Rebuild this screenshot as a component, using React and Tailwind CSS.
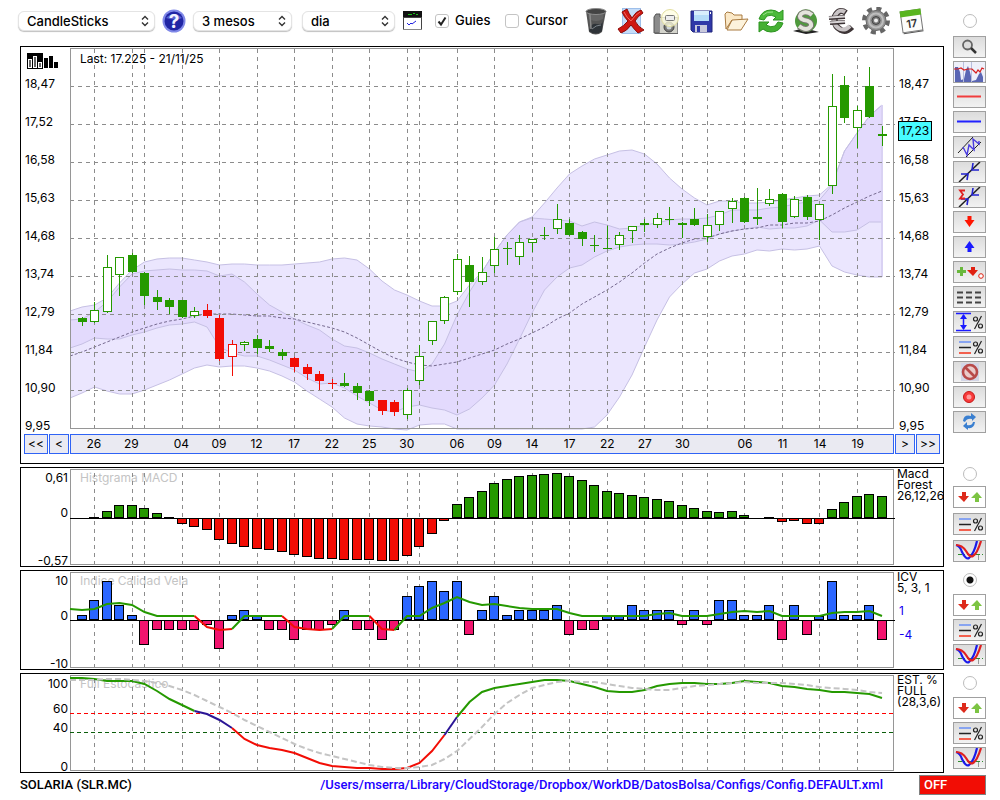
import { useState } from "react";

// session index -> x inside the plot
const xAt = (i) => 82 + 12.5 * i;
const colAt = (i) => Math.floor(xAt(i));

// [session index, day label]
const DAYS = [
  [1, "26"], [4, "29"], [5, ""], [8, "04"], [11, "09"], [14, "12"], [17, "17"],
  [20, "22"], [23, "25"], [26, "30"], [27, ""], [30, "06"], [33, "09"], [36, "14"],
  [39, "17"], [42, "22"], [45, "27"], [48, "30"], [50, ""], [53, "06"], [56, "11"],
  [59, "14"], [62, "19"],
];

const PRICES = ["18,47", "17,52", "16,58", "15,63", "14,68", "13,74", "12,79", "11,84", "10,90", "9,95"];

// [high, body top, body bottom, low, kind]; g/r = filled, G/R = hollow
const CANDLES = [
  [317, 318, 322, 326, "g"], [302, 310, 322, 323, "G"], [255, 267, 312, 313, "G"],
  [257, 257, 275, 296, "G"], [253, 255, 272, 273, "g"], [272, 273, 296, 305, "g"],
  [290, 297, 302, 310, "g"], [298, 300, 307, 314, "g"], [300, 300, 317, 318, "g"],
  [307, 311, 316, 318, "G"], [304, 310, 316, 318, "r"], [315, 318, 359, 361, "r"],
  [340, 344, 357, 376, "R"], [341, 342, 345, 351, "G"], [335, 339, 348, 354, "g"],
  [340, 346, 349, 352, "g"], [349, 352, 356, 360, "g"], [357, 358, 367, 372, "r"],
  [364, 367, 374, 380, "r"], [371, 374, 381, 390, "r"], [379, 383, 384, 389, "r"],
  [373, 383, 386, 387, "g"], [383, 386, 393, 400, "g"], [390, 391, 401, 406, "g"],
  [400, 400, 411, 415, "r"], [400, 402, 412, 416, "r"], [388, 390, 415, 419, "G"],
  [345, 356, 381, 385, "G"], [321, 321, 341, 345, "G"], [296, 297, 321, 324, "G"],
  [254, 259, 292, 295, "G"], [256, 265, 282, 307, "g"], [257, 272, 282, 285, "G"],
  [237, 249, 266, 273, "G"], [242, 248, 249, 265, "g"], [235, 242, 257, 265, "G"],
  [239, 239, 243, 252, "G"], [227, 235, 236, 240, "g"], [204, 219, 229, 234, "G"],
  [219, 223, 235, 236, "g"], [231, 232, 239, 246, "g"], [235, 245, 246, 252, "g"],
  [226, 248, 249, 249, "g"], [232, 235, 245, 250, "G"], [226, 226, 231, 243, "G"],
  [219, 223, 225, 232, "g"], [213, 218, 225, 228, "G"], [207, 219, 220, 225, "g"],
  [222, 223, 225, 238, "g"], [208, 219, 225, 226, "g"], [214, 225, 237, 242, "G"],
  [211, 211, 225, 231, "G"], [198, 201, 209, 223, "G"], [197, 198, 222, 223, "g"],
  [188, 217, 219, 225, "g"], [189, 199, 204, 206, "G"], [193, 194, 222, 228, "g"],
  [196, 199, 217, 218, "G"], [195, 197, 217, 220, "g"], [204, 204, 220, 240, "G"],
  [74, 106, 186, 194, "G"], [76, 85, 118, 123, "g"], [106, 110, 128, 148, "G"],
  [67, 86, 117, 118, "g"], [126, 134, 136, 146, "g"],
];

// band series start one session before the first candle
const OUTER_TOP = [
  311, 307, 305, 298, 283, 270, 262, 259, 258, 258, 260, 262, 265, 264, 264, 265, 265, 265, 264, 263, 262, 259,
  258, 260, 269, 281, 290, 295, 301, 306, 306, 301, 285, 272, 252, 235, 222, 217, 203, 188, 174, 166, 159, 155,
  151, 150, 154, 164, 178, 189, 198, 205, 201, 201, 203, 203, 202, 200, 198, 196, 195, 184, 151, 133, 116, 105,
];
const INNER_TOP = [
  320, 319, 312, 302, 287, 274, 271, 270, 269, 270, 270, 271, 276, 274, 282, 294, 305, 312, 319, 325, 330, 339,
  346, 348, 353, 359, 364, 369, 372, 364, 344, 315, 292, 272, 252, 235, 222, 218, 219, 220, 221, 226, 222, 225,
  229, 228, 225, 223, 220, 219, 219, 218, 215, 210, 210, 210, 208, 207, 204, 202, 200, 185, 151, 133, 116, 105,
];
const MIDDLE = [
  356, 352, 347, 342, 337, 332, 328, 324, 321, 319, 316, 314, 314, 314, 315, 316, 316, 318, 319, 322, 325, 328,
  332, 338, 345, 352, 358, 362, 365, 366, 364, 362, 358, 354, 350, 344, 339, 333, 327, 319, 313, 304, 297, 290,
  282, 273, 263, 254, 248, 243, 239, 238, 234, 231, 229, 228, 225, 225, 223, 223, 221, 215, 208, 202, 196, 191,
];
const INNER_LOW = [
  348, 344, 338, 339, 339, 335, 332, 328, 325, 324, 322, 327, 347, 353, 356, 356, 360, 365, 370, 378, 384, 383,
  388, 396, 403, 410, 412, 407, 405, 408, 410, 415, 409, 398, 385, 364, 339, 313, 290, 277, 268, 265, 257, 251,
  247, 245, 244, 244, 245, 244, 242, 239, 234, 231, 229, 227, 229, 228, 228, 226, 220, 232, 232, 230, 222, 222,
];
const OUTER_LOW = [
  398, 393, 387, 391, 394, 394, 390, 385, 380, 374, 368, 365, 367, 366, 366, 368, 371, 376, 382, 391, 399, 407,
  418, 424, 426, 427, 429, 430, 425, 424, 424, 429, 429, 429, 429, 429, 429, 429, 429, 429, 429, 429, 427, 415,
  397, 375, 347, 320, 297, 284, 273, 269, 261, 256, 254, 250, 251, 249, 250, 249, 246, 266, 272, 275, 277, 277,
];

const MACD = [
  0, 1, 7, 13, 13, 10, 5, 1, -5, -8, -11, -21, -25, -28, -30, -31, -33, -36, -38, -40, -40, -41, -41, -41, -42, -42,
  -37, -28, -15, -2, 14, 21, 27, 35, 39, 42, 43, 44, 45, 42, 38, 33, 27, 25, 23, 21, 19, 17, 13, 10, 7, 6, 7, 3, 0,
  1, -3, -2, -5, -5, 9, 16, 22, 24, 22,
];
const ICV = [
  5, 20, 39, 15, 5, -24, -9, -9, -9, -9, -4, -28, 5, 10, 5, -9, -9, -19, -9, -9, -4, 10, -9, -9, -19, -9, 24, 34, 39,
  29, 39, -14, 10, 24, 5, 10, 10, 10, 15, -14, -9, -9, 4, 4, 15, 10, 10, 10, -4, 10, -4, 20, 20, 5, 5, 15, -19, 15,
  -14, 4, 39, 5, 5, 15, -19,
];
const ICV_LINE = [
  609, 610, 609, 604, 603, 605, 612, 616, 616, 616, 616, 627, 630, 629, 616, 616, 616, 616, 627, 629, 630, 629, 616,
  616, 616, 629, 630, 616, 616, 608, 603, 597, 602, 605, 604, 606, 608, 609, 609, 609, 613, 616, 616, 616, 616, 616,
  616, 614, 613, 616, 616, 616, 614, 612, 611, 612, 611, 616, 616, 616, 616, 613, 612, 612, 611, 616,
];
const STOCH = [
  678, 678, 679, 681, 681, 681, 684, 691, 699, 705, 711, 714, 720, 728, 739, 745, 748, 750, 753, 758, 763, 766, 767,
  768, 768, 769, 769, 768, 763, 751, 735, 717, 702, 692, 688, 686, 684, 682, 680, 680, 681, 684, 687, 691, 692, 692,
  690, 686, 684, 683, 683, 684, 684, 683, 681, 682, 683, 686, 687, 689, 690, 692, 692, 693, 694, 698,
];
const STOCH_SLOW = [
  680, 680, 680, 679, 679, 680, 681, 683, 686, 690, 695, 701, 707, 713, 720, 726, 732, 738, 744, 749, 753, 756, 759,
  762, 765, 767, 768, 768, 767, 765, 759, 751, 739, 727, 714, 703, 695, 688, 685, 682, 681, 682, 682, 684, 686, 688,
  689, 690, 690, 688, 686, 685, 684, 683, 682, 683, 683, 683, 684, 685, 687, 688, 689, 690, 692, 693,
];

const GREEN = "#259900";
const RED = "#f20d05";
const INDIGO = "#2a1596";

// [from session, to session, colour]
const ICV_PARTS = [
  [-1, 9, GREEN], [9, 12, RED], [12, 16, GREEN], [16, 20, RED], [20, 23, GREEN], [23, 25, RED], [25, 64, GREEN],
];
const STOCH_PARTS = [
  [-1, 9, GREEN], [9, 12, INDIGO], [12, 29, RED], [29, 30, INDIGO], [30, 64, GREEN],
];

const pointAt = (y, k) => `${k === 0 ? 70 : xAt(k - 1)},${y}`;
const points = (series) => series.map(pointAt).join(" ");
const band = (top, low) => `${points(top)} ${low.map(pointAt).reverse().join(" ")}`;

function Plot({ top, height, children }) {
  return (
    <svg
      className="relative block w-full"
      height={height}
      viewBox={`70 ${top} 824 ${height}`}
      preserveAspectRatio="none"
      overflow="visible"
      aria-hidden="true"
    >
      {children}
    </svg>
  );
}

function Frame({ top, bottom }) {
  return (
    <rect
      x="70.5" y={top + 0.5} width="823" height={bottom - top}
      fill="none" stroke="#969696" shapeRendering="crispEdges"
    />
  );
}

function DayLines({ top, bottom }) {
  return (
    <g stroke="#8c8c8c" strokeDasharray="4 4" shapeRendering="crispEdges">
      {DAYS.map(([i]) => (
        <path key={i} d={`M${colAt(i) + 0.5} ${top}V${bottom}`} />
      ))}
    </g>
  );
}

function Bars({ values, base, up, down }) {
  return (
    <g stroke="#000" shapeRendering="crispEdges">
      {values.map((v, i) =>
        v === 0 ? null : (
          <rect
            key={i}
            x={Math.floor(xAt(i) - 5) + 0.5}
            y={(v > 0 ? base - v : base) + 0.5}
            width="9"
            height={v > 0 ? Math.max(v - 1, 0.5) : -v}
            fill={v > 0 ? up : down}
          />
        )
      )}
      <path d={`M70 ${base + 0.5}H895`} />
    </g>
  );
}

function ColoredLine({ series, parts }) {
  const all = series.map(pointAt);
  return (
    <g fill="none" strokeWidth="2">
      {parts.map(([from, to, color]) => (
        <polyline key={from} points={all.slice(from + 1, to + 2).join(" ")} stroke={color} />
      ))}
    </g>
  );
}

function Candles() {
  return (
    <g shapeRendering="crispEdges">
      {CANDLES.map(([high, top, bottom, low, kind], i) => {
        const x = colAt(i);
        const color = kind.toLowerCase() === "g" ? GREEN : RED;
        const hollow = kind === "G" || kind === "R";
        return (
          <g key={i}>
            <rect x={x} y={high} width="1" height={low - high} fill={color} />
            {hollow ? (
              <rect x={x - 3.5} y={top + 0.5} width="8" height={bottom - top - 1} fill="#fff" stroke={color} />
            ) : (
              <rect x={x - 4} y={top} width="9" height={bottom - top} fill={color} />
            )}
          </g>
        );
      })}
    </g>
  );
}

/* ---------- toolbar ---------- */

function Picker({ label, options, className }) {
  return (
    <div className={`relative ${className}`}>
      <select
        aria-label={label}
        className="block h-5 w-full appearance-none rounded-md border border-[#e4e4e4] bg-white pl-2 text-[13px] font-medium leading-4 text-black shadow-[0_1px_1px_rgba(0,0,0,0.25)]"
      >
        {options.map((o) => (
          <option key={o}>{o}</option>
        ))}
      </select>
      <svg className="pointer-events-none absolute right-1.5 top-1 h-3 w-2" viewBox="0 0 8 12" fill="none" stroke="#333" strokeWidth="1.4">
        <path d="M1 4.5L4 1.5L7 4.5M1 7.5L4 10.5L7 7.5" />
      </svg>
    </div>
  );
}

function Check({ label, defaultChecked }) {
  return (
    <label className="flex items-center gap-1.5 text-[13px] font-medium">
      <span className="relative flex">
        <input
          type="checkbox"
          defaultChecked={defaultChecked}
          className="peer h-3.5 w-3.5 appearance-none rounded-[3px] border border-[#c4c4c4] bg-white"
        />
        <svg className="pointer-events-none absolute inset-0 hidden h-3.5 w-3.5 peer-checked:block" viewBox="0 0 14 14" fill="none" stroke="#222" strokeWidth="2">
          <path d="M3.5 7.5L6 10.5L10.5 3.5" />
        </svg>
      </span>
      {label}
    </label>
  );
}

const ICONS = [
  ["Esborrar", (
    <>
      <path d="M4 4L7 25Q14 30 20 25L24 4Z" fill="#555" />
      <path d="M7 24Q9 15 15 17T21 12L20 24Q14 29 7 24Z" fill="#2e3338" />
      <path d="M6 5L22 5L21 12Q14 16 7 12Z" fill="#666" />
      <path d="M8 7L9 22" stroke="#8a8a8a" strokeWidth="1.5" />
      <ellipse cx="14" cy="4.5" rx="10" ry="3" fill="#444" stroke="#8d8d8d" />
      <path d="M10 22Q14 18 19 18" stroke="#7a8288" fill="none" />
    </>
  )],
  ["Eliminar", (
    <>
      <rect x="5.5" y="1.5" width="18" height="25" fill="#c5dcf8" stroke="#9dbfea" />
      <path d="M5 5L10 2Q12 7 15 11Q19 4 24 3L26 6Q21 9 18 14Q21 20 27 23L21 26Q17 22 14 18Q10 24 4 26L1 22Q7 19 11 14Q7 10 5 5Z" fill="#cf1712" stroke="#8b0b08" />
      <path d="M7 5Q10 11 14 14Q18 8 23 5" stroke="#f1635c" fill="none" />
    </>
  )],
  ["Captura", (
    <>
      <path d="M2 10L4 7H8V26H2Z" fill="#8b8b8b" stroke="#555" />
      <rect x="7.5" y="10.5" width="18" height="16" fill="#d4d4cc" stroke="#8d8d8d" />
      <path d="M3 26.5H26" stroke="#666" />
      <circle cx="17" cy="20" r="5" fill="#777" stroke="#444" />
      <circle cx="17" cy="20" r="2.5" fill="#cfd6d8" />
      <circle cx="18" cy="11" r="8.5" fill="#fffde0" fillOpacity="0.75" stroke="#e3dfa0" />
      <rect x="13.5" y="8.5" width="9" height="5" rx="1" fill="#eee" stroke="#777" />
    </>
  )],
  ["Desar", (
    <>
      <path d="M4 4H25V25H6L4 23Z" fill="#3038a8" stroke="#20267c" />
      <rect x="7" y="4" width="15" height="10" fill="#b5dcf8" />
      <path d="M7 4H22V8H7Z" fill="#d8eefc" />
      <rect x="8" y="18" width="12" height="7" fill="#c9c9dc" />
      <rect x="10" y="19" width="3" height="6" fill="#3038a8" />
      <rect x="23" y="5" width="1" height="2" fill="#fff" />
    </>
  )],
  ["Obrir", (
    <g fill="#fbe9c8" stroke="#a97b41" strokeLinejoin="round">
      <path d="M4 22L3 7L5 5L10 6L12 8H20V12" />
      <path d="M5 23L10 13L26 12L19 23Z" fill="#fdf3dc" />
      <path d="M4 22L10 13" />
    </g>
  )],
  ["Actualitzar", (
    <g strokeLinejoin="round">
      <path d="M2 12Q5 3 14 3Q19 3 22 6L26 3V13H16L19 10Q14 7 10 9L7 13Z" fill="#4cba3a" stroke="#2c9420" />
      <path d="M26 16Q23 25 14 25Q9 25 6 22L2 25V15H12L9 18Q14 21 18 19L21 15Z" fill="#45b033" stroke="#2c9420" />
      <path d="M6 8Q10 4 16 5" stroke="#9de38c" fill="none" />
    </g>
  )],
  ["Dòlar", (
    <>
      <path d="M1 24L12 21L27 25L14 27Z" fill="#222" />
      <circle cx="14" cy="14" r="11" fill="#4f9a3d" />
      <path d="M7 6Q14 0 21 6" stroke="#9bd08c" strokeWidth="2" fill="none" />
      <path d="M20 8Q14 3 9 7Q6 11 12 13Q20 14 19 19Q15 25 7 19" stroke="#77776f" strokeWidth="6" fill="none" />
      <path d="M20 8Q14 3 9 7Q6 11 12 13Q20 14 19 19Q15 25 7 19" stroke="#e4e4dc" strokeWidth="4" fill="none" />
    </>
  )],
  ["Euro", (
    <>
      <path d="M19 6Q12 1 8 9Q6 19 14 23Q19 26 25 20" stroke="#3d3436" strokeWidth="6" fill="none" />
      <path d="M18 5Q12 1 8 9Q5 18 13 22Q18 24 23 19" stroke="#c9c4c6" strokeWidth="4" fill="none" />
      <path d="M2 11L18 10M3 16L18 15" stroke="#3d3436" strokeWidth="4" />
      <path d="M2 10.5L18 9.5M3 15.5L18 14.5" stroke="#d8d4d6" strokeWidth="2" />
    </>
  )],
  ["Configuració", (
    <>
      <circle cx="14" cy="13.5" r="12" fill="none" stroke="#666" strokeWidth="4" strokeDasharray="5 4.42" />
      <circle cx="14" cy="13.5" r="10" fill="#939393" stroke="#666" />
      <circle cx="14" cy="13.5" r="7" fill="none" stroke="#bdbdbd" strokeWidth="2" />
      <circle cx="14" cy="13.5" r="4" fill="#777" stroke="#444" />
      <circle cx="14" cy="13.5" r="2" fill="#eee" />
    </>
  )],
  ["Calendari", (
    <g transform="rotate(-8 14 14)">
      <rect x="4.5" y="3.5" width="20" height="21" fill="#fdfdfb" stroke="#777" />
      <path d="M4 3H25V9H4Z" fill="#58b51e" />
      <path d="M5 25.5H25" stroke="#555" />
      <text x="14.5" y="20.5" textAnchor="middle" fontSize="11" fontWeight="600" fill="#333">17</text>
    </g>
  )],
];

function HelpIcon() {
  return (
    <svg className="h-6 w-6" viewBox="0 0 24 24">
      <circle cx="12" cy="12" r="11.5" fill="#7f88e8" />
      <circle cx="12" cy="12" r="9.5" fill="#2025a4" />
      <path d="M4 9Q12 1 20 9Q14 12 4 9Z" fill="#5660cf" />
      <text x="12" y="19" textAnchor="middle" fontSize="19" fontWeight="700" fill="#f2f2ff">?</text>
    </svg>
  );
}

function ConsoleIcon() {
  return (
    <svg className="h-5 w-5" viewBox="0 0 20 20" shapeRendering="crispEdges">
      <rect x="0.5" y="6.5" width="18" height="12" fill="#fff" stroke="#444" />
      <rect width="19" height="6" fill="#111" />
      <path d="M5 3.5H9M10 2.5H12M13 3.5H15" stroke="#18c018" />
      <path d="M4 12L6 14L8 12L9 13L13 10" fill="none" stroke="#2020e0" shapeRendering="auto" />
      <path d="M0 18.5H19" stroke="#888" />
    </svg>
  );
}

/* ---------- side tools ---------- */

function PercentMark() {
  return (
    <g stroke="#222" strokeWidth="1.2" fill="none">
      <path d="M27.5 4L20.5 17" />
      <circle cx="21.5" cy="7" r="2" />
      <circle cx="26.5" cy="14" r="2" />
    </g>
  );
}

const LINES_PERCENT = (
  <>
    <path d="M5 5H17" stroke="#2e66ff" />
    <path d="M5 10.5H17" stroke="#222" strokeWidth="1.5" />
    <path d="M5 16H17" stroke="#f2604e" strokeWidth="2" />
    <PercentMark />
  </>
);
const ARROWS = (
  <>
    <path d="M8 5H12V9H15L10 15L4 9H8Z" fill="#dd2a1b" />
    <path d="M21 15H25V11H28L23 5L17 11H21Z" fill="#7cc443" />
  </>
);
const CURVES = (
  <>
    <path d="M4 13.5H29" stroke="#2e8b2e" strokeDasharray="4 2 1 2" />
    <path d="M24.5 14V19" stroke="#999" />
    <path d="M2 4Q6 5 8 11Q12 19 15 17Q20 13 23 0" fill="none" stroke="#1b1bea" strokeWidth="2.2" />
    <path d="M2 4Q8 4 12 10Q16 17 19 15Q23 13 27 0" fill="none" stroke="#e02020" strokeWidth="2.2" />
  </>
);
const CROSSING = (
  <>
    <path d="M5 20L26 0" stroke="#222" strokeWidth="1.5" />
    <path d="M7 12L14 12L13 18M19 1L18 8L25 8" fill="none" stroke="#2222d0" strokeWidth="1.6" />
  </>
);

const CHART_TOOLS = [
  ["Lupa", (
    <>
      <circle cx="13.5" cy="8" r="4.5" fill="#ddd" stroke="#666" strokeWidth="1.8" />
      <path d="M17 11L22 16" stroke="#333" strokeWidth="2.5" />
    </>
  )],
  ["Volum", (
    <>
      <rect width="31" height="20" fill="#eef0fa" />
      <path d="M1 20V5L4 5L6 10L7 18L10 17L12 8L14 4L16 10L18 19L22 18L25 12L27 10L29 15V20Z" fill="#5a66b4" />
      <path d="M9.5 0V20M17.5 0V20" stroke="#b8bede" />
      <path d="M0 7L4 7L7 6L10 8L14 7L18 7L20 9L22 11L24 8L26 10L28 6L30 7" fill="none" stroke="#d82020" strokeWidth="1.2" />
    </>
  )],
  ["Línia vermella", <path d="M3 9.5H27" stroke="#f03c3c" strokeWidth="2" />],
  ["Línia blava", <path d="M3 9.5H27" stroke="#2222ff" strokeWidth="2" />],
  ["Canal", (
    <>
      <path d="M4 16L19 0M12 20L27 5" stroke="#222" />
      <path d="M9 10L13 18L15 8L20 13L19 2L25 7L25 4" fill="none" stroke="#4a3be0" strokeWidth="1.4" />
    </>
  )],
  ["Tendència", CROSSING],
  ["Suma de tendència", (
    <>
      {CROSSING}
      <path d="M11 3.5H6L9 7.5L6 11.5H11" stroke="#e02020" strokeWidth="1.8" fill="none" />
    </>
  )],
  ["Senyal de venda", <path d="M13.5 4H17.5V8H20.5L15.5 15L10.5 8H13.5Z" fill="#ff1400" />],
  ["Senyal de compra", <path d="M13.5 15H17.5V11H20.5L15.5 4L10.5 11H13.5Z" fill="#1a1aff" />],
  ["Senyals", (
    <>
      <path d="M6 5H9V8H12V11H9V14H6V11H3V8H6Z" fill="#69b83c" />
      <path d="M17 5H21V8H24L19 14L13 8H17Z" fill="#e02010" />
      <circle cx="27" cy="14" r="2.3" fill="#fff" stroke="#e02010" />
    </>
  )],
  ["Guions", <path d="M3 5.5H9M12 5.5H18M21 5.5H27M3 10.5H9M12 10.5H18M21 10.5H27M3 15.5H9M12 15.5H18M21 15.5H27" stroke="#444" strokeWidth="1.8" />],
  ["Distància", (
    <>
      <path d="M2 1.5H17M2 18.5H17M9.5 3V17" stroke="#1a1aff" strokeWidth="1.5" />
      <path d="M9.5 2L13 7H6ZM9.5 18L13 13H6Z" fill="#1a1aff" />
      <PercentMark />
    </>
  )],
  ["Nivells", LINES_PERCENT],
  ["Prohibit", (
    <>
      <rect x="7" y="1" width="18" height="18" fill="#d3d6e6" />
      <circle cx="16" cy="10" r="7" fill="#eacaca" stroke="#b84a4a" strokeWidth="2.6" />
      <path d="M11 5L21 15" stroke="#b84a4a" strokeWidth="2.6" />
    </>
  )],
  ["Gravar", (
    <>
      <circle cx="15" cy="10" r="5.5" fill="#f83a3a" stroke="#c51a1a" />
      <circle cx="15" cy="10" r="2.5" fill="#ff9a9a" />
    </>
  )],
  ["Recarregar", (
    <g fill="#3a7fd0">
      <path d="M9 9Q10 2 17 4L17 1L22 5L18 9V7Q13 6 11 10Z" />
      <path d="M21 10Q20 17 14 16L14 18L9 14L13 10V13Q18 14 19 10Z" />
    </g>
  )],
];

const INDICATOR_TOOLS = [
  ["Senyals", ARROWS],
  ["Nivells", LINES_PERCENT],
  ["Corbes", CURVES],
];

function ToolButton({ label, plain, children }) {
  return (
    <button
      type="button"
      aria-label={label}
      className={`h-[22px] w-full shrink-0 border border-[#a0a0a0] ${
        plain ? "bg-white" : "bg-linear-to-b from-[#dcdcdc] to-[#f2f2f2]"
      }`}
    >
      <svg className="block h-5 w-full" viewBox="0 0 31 20" fill="none">
        {children}
      </svg>
    </button>
  );
}

function PanelRadio({ value, selected, onSelect, className = "" }) {
  return (
    <input
      type="radio"
      name="panel"
      aria-label={value}
      checked={selected === value}
      onChange={() => onSelect(value)}
      className={`h-3.5 w-3.5 shrink-0 appearance-none rounded-full border border-[#bcbcbc] bg-white checked:bg-[radial-gradient(circle,#111_3px,#fff_4px)] ${className}`}
    />
  );
}

/* ---------- panels ---------- */

function NavButton({ label, className, children }) {
  return (
    <button
      type="button"
      aria-label={label}
      className={`h-5 border border-[#2f63f5] bg-[#eaeaf2] text-xs leading-4 ${className}`}
    >
      {children}
    </button>
  );
}

function PricePanel() {
  return (
    <section className="mt-2.5 grid min-w-0 grid-cols-[49px_1fr_49px] border border-black pb-[9px]">
      <div className="text-xs leading-4">
        <div className="h-[29px] pl-1.5 pt-1.5">
          <svg className="h-4 w-8" viewBox="0 0 32 16" shapeRendering="crispEdges">
            <rect width="16" height="16" />
            <path d="M1.5 6.5H4.5V14.5H1.5ZM6.5 3.5H9.5V14.5H6.5ZM11.5 9.5H14.5V14.5H11.5Z" fill="#666" stroke="#fff" />
            <path d="M17 5H21V15H17ZM22 3H26V15H22ZM27 9H31V15H27Z" />
          </svg>
        </div>
        <ul className="flex flex-col gap-[22px] pl-1">
          {PRICES.map((p) => (
            <li key={p} className="h-4">{p}</li>
          ))}
        </ul>
      </div>

      <div className="relative min-w-0">
        <Plot top={47} height={387}>
          <polygon points={band(OUTER_TOP, OUTER_LOW)} fill="#ebe6fe" />
          <polygon points={band(INNER_TOP, INNER_LOW)} fill="#e3dafd" />
          <g fill="none" stroke="#c6c0e4">
            {[OUTER_TOP, INNER_TOP, INNER_LOW, OUTER_LOW].map((s, k) => (
              <polyline key={k} points={points(s)} />
            ))}
            <path d="M882 105V277" strokeWidth="2" stroke="#d9d2f3" />
          </g>
          <polyline points={points(MIDDLE)} fill="none" stroke="#75698f" strokeDasharray="3 2" />
          <DayLines top={49} bottom={430} />
          <g stroke="#8c8c8c" strokeDasharray="4 4" shapeRendering="crispEdges">
            {PRICES.slice(0, 9).map((p, k) => (
              <path key={p} d={`M70 ${86.5 + 38 * k}H895`} />
            ))}
          </g>
          <Frame top={48} bottom={428} />
          <Candles />
        </Plot>
        <p className="absolute left-2.5 top-1 text-xs leading-4">Last: 17.225 - 21/11/25</p>
      </div>

      <div className="relative text-xs leading-4">
        <ul className="flex flex-col gap-[22px] pl-[5px] pt-[29px]">
          {PRICES.map((p) => (
            <li key={p} className="h-4">{p}</li>
          ))}
        </ul>
        <span className="absolute left-1 top-[74px] flex h-5 w-[34px] items-center justify-center border border-black bg-[#47fbff]">
          17,23
        </span>
      </div>

      <div className="flex justify-end gap-px pr-px">
        <NavButton label="Inici" className="w-6">&lt;&lt;</NavButton>
        <NavButton label="Anterior" className="w-5">&lt;</NavButton>
      </div>
      <ol className="grid h-5 min-w-0 grid-cols-[repeat(65,minmax(0,1fr))] border border-[#2f63f5] bg-[#eaeaf2] px-1 text-xs leading-[18px]">
        {DAYS.filter(([, d]) => d).map(([i, d]) => (
          <li key={i} className="row-start-1 flex justify-center" style={{ gridColumnStart: i + 1 }}>
            {d}
          </li>
        ))}
      </ol>
      <div className="flex gap-px pl-px">
        <NavButton label="Següent" className="w-5">&gt;</NavButton>
        <NavButton label="Final" className="w-6">&gt;&gt;</NavButton>
      </div>
    </section>
  );
}

// ticks: [text, spacing above]
function IndicatorPanel({ title, ticks, top, legend, values, children }) {
  return (
    <section className="grid h-[100px] min-w-0 grid-cols-[49px_1fr_49px] overflow-hidden border border-black">
      <ul className="pr-0.5 text-right text-xs leading-[14px]">
        {ticks.map(([text, space]) => (
          <li key={text} className={space}>{text}</li>
        ))}
      </ul>
      <div className="relative min-w-0">
        <h2 className="absolute left-2.5 top-[3px] text-xs leading-[14px] text-[#c4c4c4]">{title}</h2>
        <Plot top={top} height={98}>
          <DayLines top={top + 5} bottom={top + 98} />
          <Frame top={top + 1} bottom={top + 96} />
          {children}
        </Plot>
      </div>
      <div className="pl-[3px] text-xs leading-[11px]">
        {legend.map((l) => (
          <p key={l} className="whitespace-nowrap">{l}</p>
        ))}
        {values && (
          <div className="mt-1.5 pl-0.5 leading-6 text-[#1500f0]">
            {values.map((v) => (
              <p key={v}>{v}</p>
            ))}
          </div>
        )}
      </div>
    </section>
  );
}

function IndicatorTools({ value, selected, onSelect, className, radioClass }) {
  return (
    <div className={`flex flex-col items-center ${className}`}>
      <PanelRadio value={value} selected={selected} onSelect={onSelect} className={radioClass} />
      {INDICATOR_TOOLS.map(([label, icon]) => (
        <ToolButton key={label} label={label} plain={icon === ARROWS}>{icon}</ToolButton>
      ))}
    </div>
  );
}

export default function App() {
  const [selected, setSelected] = useState("ICV");

  return (
    <div className="min-h-screen bg-white pb-1 pl-5 pr-3.5 font-[Inter,'Liberation_Sans',sans-serif] text-black">
      <header className="-ml-0.5 flex h-9 items-center pt-1.5">
        <Picker label="Tipus de gràfic" options={["CandleSticks", "Línia", "Barres"]} className="w-[137px]" />
        <button type="button" aria-label="Ajuda" className="mx-[7px] shrink-0">
          <HelpIcon />
        </button>
        <Picker label="Període" options={["3 mesos", "6 mesos", "1 any"]} className="w-[99px]" />
        <Picker label="Interval" options={["dia", "setmana", "mes"]} className="ml-2.5 w-[93px]" />
        <button type="button" aria-label="Consola" className="ml-2 shrink-0">
          <ConsoleIcon />
        </button>
        <div className="ml-3 flex gap-[15px]">
          <Check label="Guies" defaultChecked />
          <Check label="Cursor" />
        </div>
        <div className="ml-3.5 flex gap-[7px]">
          {ICONS.map(([label, icon]) => (
            <button key={label} type="button" aria-label={label} className="shrink-0">
              <svg className="h-7 w-7" viewBox="0 0 28 28" fill="none">{icon}</svg>
            </button>
          ))}
        </div>
        <div className="ml-auto flex w-[33px] justify-center">
          <PanelRadio value="Preu" selected={selected} onSelect={setSelected} />
        </div>
      </header>

      <main className="grid grid-cols-[minmax(0,1fr)_33px] items-start gap-x-[9px]">
        <PricePanel />
        <div className="flex flex-col gap-[3px]">
          {CHART_TOOLS.map(([label, icon]) => (
            <ToolButton key={label} label={label}>{icon}</ToolButton>
          ))}
        </div>

        <div className="col-span-2 grid grid-cols-subgrid gap-y-[3px] pt-[3px]">
          <IndicatorPanel
            title="Histgrama MACD"
            top={468}
            ticks={[["0,61", "mt-[3px]"], ["0", "mt-[21px]"], ["-0,57", "mt-[34px]"]]}
            legend={["Macd", "Forest", "26,12,26"]}
          >
            <Bars values={MACD} base={518} up={GREEN} down={RED} />
          </IndicatorPanel>
          <IndicatorTools value="MACD" selected={selected} onSelect={setSelected} className="gap-[5px]" />

          <IndicatorPanel
            title="Indice Calidad Vela"
            top={571}
            ticks={[["10", "mt-[3px]"], ["0", "mt-[21px]"], ["-10", "mt-[34px]"]]}
            legend={["ICV", "5, 3, 1"]}
            values={["1", "-4"]}
          >
            <Bars values={ICV} base={620} up="#2b66ff" down="#f2146e" />
            <ColoredLine series={ICV_LINE} parts={ICV_PARTS} />
          </IndicatorPanel>
          <IndicatorTools value="ICV" selected={selected} onSelect={setSelected} className="gap-[3px] pt-[3px]" radioClass="mb-1" />

          <IndicatorPanel
            title="Full Estocastico"
            top={674}
            ticks={[["100", "mt-[3px]"], ["60", "mt-[11px]"], ["40", "mt-[5px]"], ["0", "mt-[25px]"]]}
            legend={["EST. %", "FULL", "(28,3,6)"]}
          >
            <g strokeDasharray="4 3" shapeRendering="crispEdges">
              <path d="M70 713.5H895" stroke="#f00" />
              <path d="M70 732.5H895" stroke="#0b5e0b" />
            </g>
            <ColoredLine series={STOCH} parts={STOCH_PARTS} />
            <polyline points={points(STOCH_SLOW)} fill="none" stroke="#c4c4c4" strokeWidth="2" strokeDasharray="6 3" />
          </IndicatorPanel>
          <IndicatorTools value="Estocastico" selected={selected} onSelect={setSelected} className="gap-[3px] pt-[3px]" radioClass="mb-1" />
        </div>
      </main>

      <footer className="mt-0.5 flex items-center font-[Roboto,'Liberation_Sans',sans-serif] text-[13px] font-medium leading-5">
        <span>SOLARIA (SLR.MC)</span>
        <span className="ml-auto text-[#2000ff]">
          /Users/mserra/Library/CloudStorage/Dropbox/WorkDB/DatosBolsa/Configs/Config.DEFAULT.xml
        </span>
        <button type="button" className="ml-9 h-5 w-[67px] border border-[#808080] bg-[#f20d05] pl-1 text-left leading-4 text-white">
          OFF
        </button>
      </footer>
    </div>
  );
}
